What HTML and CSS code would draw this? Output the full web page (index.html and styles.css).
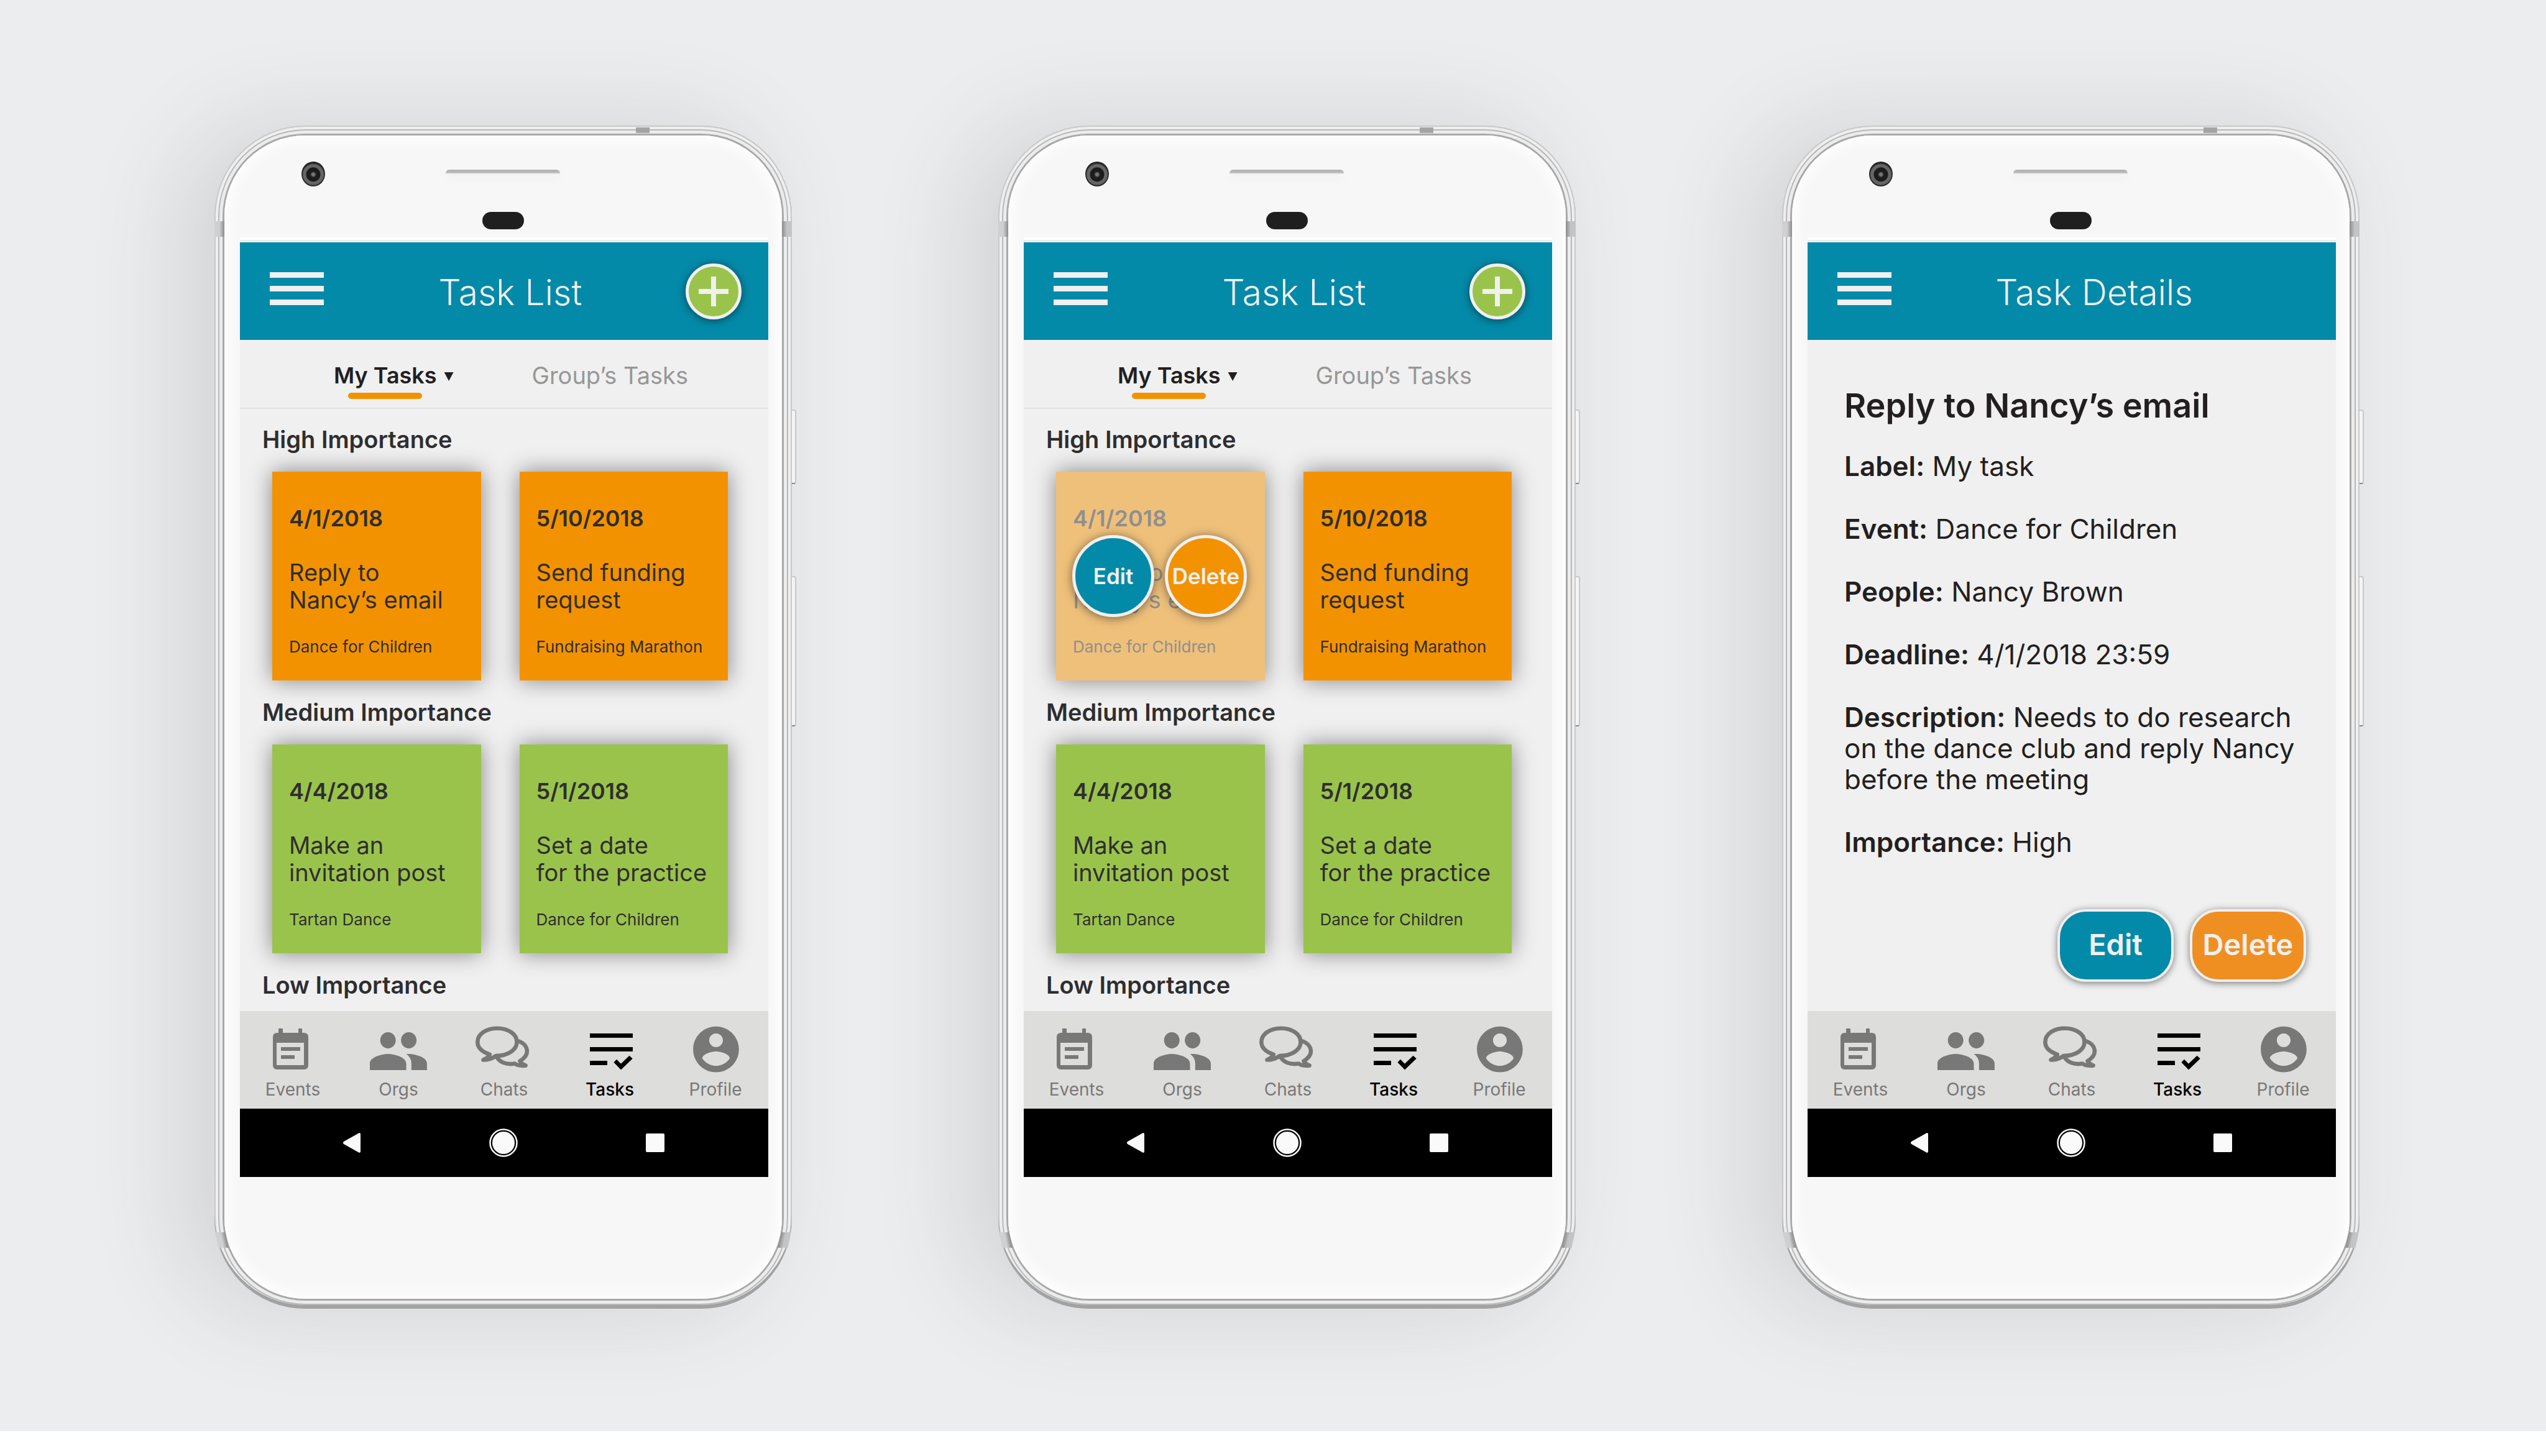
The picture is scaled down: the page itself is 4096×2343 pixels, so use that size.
FILE: index.html
```html
<!DOCTYPE html>
<html lang="en">
<head>
<meta charset="utf-8">
<meta name="viewport" content="width=device-width, initial-scale=1">
<title>Task List</title>
<link rel="stylesheet" href="styles.css">
</head>
<body>
<svg class="sprite" aria-hidden="true">
  <symbol id="i-menu" viewBox="0 0 87 53"><path d="M0 0h87v9H0zM0 22h87v9H0zM0 44h87v9H0z"/></symbol>
  <symbol id="i-plus" viewBox="0 0 48 48"><path d="M20 0h8v20h20v8H28v20h-8V28H0v-8h20z"/></symbol>
  <symbol id="i-events" viewBox="0 0 100 80"><path fill-rule="evenodd" d="M28 5h5q1 0 1 1v6h25V6q0-1 1-1h4q1 0 1 1v6h3q7 0 7 7v45q0 7-7 7H25q-7 0-7-7V19q0-7 7-7h2V6q0-1 1-1zM24 28v36h44V28zM31 35h31v6H31zM31 48h22v6H31z"/></symbol>
  <symbol id="i-orgs" viewBox="0 0 100 80"><g transform="translate(-.2 -10.8) scale(4.18 4.36)"><path d="M16 11c1.66 0 2.99-1.34 2.99-3S17.66 5 16 5c-1.66 0-3 1.34-3 3s1.34 3 3 3zm-8 0c1.66 0 2.99-1.34 2.99-3S9.66 5 8 5C6.34 5 5 6.34 5 8s1.34 3 3 3zm0 2c-2.33 0-7 1.17-7 3.5V19h14v-2.5c0-2.33-4.67-3.5-7-3.5zm8 0c-.29 0-.62.02-.97.05 1.16.84 1.97 1.97 1.97 3.45V19h6v-2.5c0-2.33-4.67-3.5-7-3.5z"/></g></symbol>
  <symbol id="i-chats" viewBox="0 0 100 80"><g fill="none" stroke="currentColor" stroke-width="6.6" stroke-linejoin="round" stroke-linecap="round"><path d="M26.8 46.8C13 42 7.3 35 7.3 27 7.3 14 21 4.8 38.9 4.8S70.5 14 70.5 27C70.5 39 57 48.8 37 49 32 52.6 26 55.7 16.5 55.5 22 53 25.5 50.5 26.8 46.8z"/><path d="M73.5 25.5C82 28.5 86.9 35 86.9 42c0 6.500-4.400 11-11.400 15.500C77 60.500 79.500 62.500 84.500 64.600 76 65.500 70.500 63.700 67 61.500 54 64 43 59 38.500 51.500"/></g></symbol>
  <symbol id="i-tasks" viewBox="0 0 100 80"><path d="M18 13h69v7H18zM18 35h69v7H18zM18 57h28v7H18zM56.400 59.500l4.600-4.800 7 7 13.500-13 5.200 4.800L68 71.500z"/></symbol>
  <symbol id="i-profile" viewBox="0 0 100 80"><g transform="translate(6.800 -5.500) scale(3.680)"><path d="M12 2C6.480 2 2 6.480 2 12s4.480 10 10 10 10-4.480 10-10S17.520 2 12 2zm0 3c1.660 0 3 1.340 3 3s-1.340 3-3 3-3-1.340-3-3 1.340-3 3-3zm0 14.200c-2.500 0-4.710-1.280-6-3.220.030-1.990 4-3.080 6-3.080 1.990 0 5.970 1.090 6 3.080-1.290 1.940-3.500 3.220-6 3.220z"/></g></symbol>
  <symbol id="i-back" viewBox="0 0 30 34"><path d="M27 1q2 0 2 2v28q0 2-2 2L2 19q-2-2 0-4z"/></symbol>
  <symbol id="i-home" viewBox="0 0 46 46"><circle cx="23" cy="23" r="18"/><circle cx="23" cy="23" r="21.500" fill="none" stroke="currentColor" stroke-width="2.500"/></symbol>
  <symbol id="i-recent" viewBox="0 0 30 30"><rect width="30" height="30" rx="2"/></symbol>
</svg>

<main class="stage">

  <section class="phone" aria-label="Task list">
    <i class="band band-top"></i><i class="band band-l1"></i><i class="band band-r1"></i><i class="band band-l2"></i><i class="band band-r2"></i>
    <i class="key key-power"></i><i class="key key-volume"></i>
    <div class="face">
      <div class="forehead"><i class="camera"></i><i class="speaker"></i><i class="sensor"></i></div>
      <div class="screen">
        <header class="appbar">
          <button class="menu" aria-label="Menu"><svg><use href="#i-menu"/></svg></button>
          <h1 class="title">Task List</h1>
          <button class="add" aria-label="Add task"><svg><use href="#i-plus"/></svg></button>
        </header>
        <div class="tabs">
          <button class="tab tab-on"><span class="tab-text">My Tasks</span><i class="caret"></i></button>
          <button class="tab">Group’s Tasks</button>
        </div>
        <div class="list">
          <h2 class="group">High Importance</h2>
          <div class="cards">
            <article class="card high">
              <time class="date">4/1/2018</time>
              <p class="task">Reply to<br>Nancy’s email</p>
              <p class="event">Dance for Children</p>
            </article>
            <article class="card high">
              <time class="date">5/10/2018</time>
              <p class="task">Send funding<br>request</p>
              <p class="event">Fundraising Marathon</p>
            </article>
          </div>
          <h2 class="group">Medium Importance</h2>
          <div class="cards">
            <article class="card medium">
              <time class="date">4/4/2018</time>
              <p class="task">Make an<br>invitation post</p>
              <p class="event">Tartan Dance</p>
            </article>
            <article class="card medium">
              <time class="date">5/1/2018</time>
              <p class="task">Set a date<br>for the practice</p>
              <p class="event">Dance for Children</p>
            </article>
          </div>
          <h2 class="group">Low Importance</h2>
        </div>
        <nav class="nav">
          <a class="item" href="#events"><svg><use href="#i-events"/></svg>Events</a>
          <a class="item" href="#orgs"><svg><use href="#i-orgs"/></svg>Orgs</a>
          <a class="item" href="#chats"><svg><use href="#i-chats"/></svg>Chats</a>
          <a class="item item-on" href="#tasks"><svg><use href="#i-tasks"/></svg>Tasks</a>
          <a class="item" href="#profile"><svg><use href="#i-profile"/></svg>Profile</a>
        </nav>
        <div class="system">
          <button class="sys back" aria-label="Back"><svg><use href="#i-back"/></svg></button>
          <button class="sys home" aria-label="Home"><svg><use href="#i-home"/></svg></button>
          <button class="sys recent" aria-label="Recent"><svg><use href="#i-recent"/></svg></button>
        </div>
      </div>
    </div>
  </section>

  <section class="phone" aria-label="Task list, card selected">
    <i class="band band-top"></i><i class="band band-l1"></i><i class="band band-r1"></i><i class="band band-l2"></i><i class="band band-r2"></i>
    <i class="key key-power"></i><i class="key key-volume"></i>
    <div class="face">
      <div class="forehead"><i class="camera"></i><i class="speaker"></i><i class="sensor"></i></div>
      <div class="screen">
        <header class="appbar">
          <button class="menu" aria-label="Menu"><svg><use href="#i-menu"/></svg></button>
          <h1 class="title">Task List</h1>
          <button class="add" aria-label="Add task"><svg><use href="#i-plus"/></svg></button>
        </header>
        <div class="tabs">
          <button class="tab tab-on"><span class="tab-text">My Tasks</span><i class="caret"></i></button>
          <button class="tab">Group’s Tasks</button>
        </div>
        <div class="list">
          <h2 class="group">High Importance</h2>
          <div class="cards">
            <article class="card selected">
              <time class="date">4/1/2018</time>
              <p class="task">Reply to<br>Nancy’s email</p>
              <p class="event">Dance for Children</p>
              <div class="actions">
                <button class="round edit">Edit</button>
                <button class="round delete">Delete</button>
              </div>
            </article>
            <article class="card high">
              <time class="date">5/10/2018</time>
              <p class="task">Send funding<br>request</p>
              <p class="event">Fundraising Marathon</p>
            </article>
          </div>
          <h2 class="group">Medium Importance</h2>
          <div class="cards">
            <article class="card medium">
              <time class="date">4/4/2018</time>
              <p class="task">Make an<br>invitation post</p>
              <p class="event">Tartan Dance</p>
            </article>
            <article class="card medium">
              <time class="date">5/1/2018</time>
              <p class="task">Set a date<br>for the practice</p>
              <p class="event">Dance for Children</p>
            </article>
          </div>
          <h2 class="group">Low Importance</h2>
        </div>
        <nav class="nav">
          <a class="item" href="#events"><svg><use href="#i-events"/></svg>Events</a>
          <a class="item" href="#orgs"><svg><use href="#i-orgs"/></svg>Orgs</a>
          <a class="item" href="#chats"><svg><use href="#i-chats"/></svg>Chats</a>
          <a class="item item-on" href="#tasks"><svg><use href="#i-tasks"/></svg>Tasks</a>
          <a class="item" href="#profile"><svg><use href="#i-profile"/></svg>Profile</a>
        </nav>
        <div class="system">
          <button class="sys back" aria-label="Back"><svg><use href="#i-back"/></svg></button>
          <button class="sys home" aria-label="Home"><svg><use href="#i-home"/></svg></button>
          <button class="sys recent" aria-label="Recent"><svg><use href="#i-recent"/></svg></button>
        </div>
      </div>
    </div>
  </section>

  <section class="phone" aria-label="Task details">
    <i class="band band-top"></i><i class="band band-l1"></i><i class="band band-r1"></i><i class="band band-l2"></i><i class="band band-r2"></i>
    <i class="key key-power"></i><i class="key key-volume"></i>
    <div class="face">
      <div class="forehead"><i class="camera"></i><i class="speaker"></i><i class="sensor"></i></div>
      <div class="screen">
        <header class="appbar">
          <button class="menu" aria-label="Menu"><svg><use href="#i-menu"/></svg></button>
          <h1 class="title title-wide">Task Details</h1>
        </header>
        <div class="details">
          <h2 class="heading">Reply to Nancy’s email</h2>
          <div class="fields">
            <p><strong>Label:</strong> My task</p>
            <p><strong>Event:</strong> Dance for Children</p>
            <p><strong>People:</strong> Nancy Brown</p>
            <p><strong>Deadline:</strong> 4/1/2018 23:59</p>
            <p><strong>Description:</strong> Needs to do research<br>on the dance club and reply Nancy<br>before the meeting</p>
            <p><strong>Importance:</strong> High</p>
          </div>
          <div class="buttons">
            <button class="pill edit">Edit</button>
            <button class="pill delete">Delete</button>
          </div>
        </div>
        <nav class="nav">
          <a class="item" href="#events"><svg><use href="#i-events"/></svg>Events</a>
          <a class="item" href="#orgs"><svg><use href="#i-orgs"/></svg>Orgs</a>
          <a class="item" href="#chats"><svg><use href="#i-chats"/></svg>Chats</a>
          <a class="item item-on" href="#tasks"><svg><use href="#i-tasks"/></svg>Tasks</a>
          <a class="item" href="#profile"><svg><use href="#i-profile"/></svg>Profile</a>
        </nav>
        <div class="system">
          <button class="sys back" aria-label="Back"><svg><use href="#i-back"/></svg></button>
          <button class="sys home" aria-label="Home"><svg><use href="#i-home"/></svg></button>
          <button class="sys recent" aria-label="Recent"><svg><use href="#i-recent"/></svg></button>
        </div>
      </div>
    </div>
  </section>

</main>
</body>
</html>
```
FILE: styles.css
```css
*, *::before, *::after { box-sizing: border-box; }
body, h1, h2, p { margin: 0; }
body { background: #fff; color: #231f20; font-family: Inter, "Open Sans", sans-serif; }
button { padding: 0; border: 0; background: none; color: inherit; font: inherit; cursor: pointer; }
svg { display: block; fill: currentColor; }
i { display: block; }
.sprite { position: absolute; width: 0; height: 0; }

.stage {
  display: grid;
  grid-template-columns: repeat(3, 1fr);
  gap: 332px;
  padding: 202px 300px 197px 345px;
  background: #ecedef;
}

/* Handset */
.phone {
  position: relative;
  padding: 16px;
  border-radius: 146px;
  background: #ececec;
  box-shadow:
    inset 0 -6px 0 0 #a2a2a2,
    inset 0 0 0 2px #c9c9c9,
    inset 0 0 0 6px #efefef,
    inset 0 0 0 8px #b8b8b8,
    inset 0 0 0 13px #ececec,
    inset 0 0 0 16px #a8a8a8,
    -50px 0 150px rgba(60, 66, 64, .15);
}
.face {
  padding: 0 22px 196px 25px;
  border-radius: 130px;
  background: #f7f7f7;
  box-shadow: inset 0 0 24px 6px #fff;
}
.forehead {
  display: grid;
  grid-template: 53px 70px 49px / 1fr 184px 1fr;
  padding-right: 4px;
}
.camera {
  grid-area: 1 / 1 / 3 / 2;
  width: 38px;
  height: 40px;
  margin: 42px 0 0 99px;
  border-radius: 50%;
  background: radial-gradient(circle at 50% 52%, #777 0 2px, #1c1c1c 5px 11px, #666 12px 16px, #262626 18px);
}
.speaker {
  grid-area: 2 / 2;
  height: 7px;
  margin-top: 2px;
  border-radius: 6px 6px 0 0;
  background: linear-gradient(#b4b4b4 4px, #ececec);
  box-shadow: 0 8px 12px #f1f1f1;
}
.sensor {
  grid-area: 3 / 2;
  justify-self: center;
  width: 67px;
  height: 28px;
  border-radius: 14px;
  background: #1f1f1f;
}
.band { position: absolute; width: 16px; height: 25px; background: linear-gradient(90deg, #d0d0d0 50%, #8c8c8c); }
.band-top { top: 3px; right: 229px; width: 22px; height: 9px; background: #a4a4a4; }
.band-l1 { top: 154px; left: 0; }
.band-r1 { top: 154px; right: 0; background: linear-gradient(270deg, #c4c4c4 50%, #8c8c8c); }
.band-l2 { bottom: 98px; left: 4px; transform: skewX(12deg); }
.band-r2 { bottom: 98px; right: 4px; transform: skewX(-12deg); background: linear-gradient(270deg, #c4c4c4 50%, #8c8c8c); }
.key { position: absolute; left: 100%; width: 7px; border: 2px solid #c9c9c9; border-left: 0; border-bottom-color: #8a8a8a; border-radius: 0 4px 4px 0; background: #f4f4f4; }
.key-power { top: 457px; height: 120px; }
.key-volume { top: 725px; height: 242px; }

.screen { background: #f0f0f0; box-shadow: 0 -4px 0 #ededed, 0 -8px 0 #fff; }

/* App bar */
.appbar {
  display: flex;
  align-items: center;
  height: 157px;
  padding: 0 43px 0 48px;
  background: #048aa9;
  color: #f0f0f0;
}
.menu { width: 87px; height: 61px; padding-bottom: 8px; }
.menu svg { width: 87px; height: 53px; }
.title { flex: 1; padding: 4px 0 0 18px; font-size: 57px; font-weight: 300; line-height: 68px; text-align: center; }
.title-wide { padding: 4px 20px 0 0; }
.add {
  display: grid;
  place-items: center;
  width: 90px;
  height: 90px;
  border: 5px solid #f0f0f0;
  border-radius: 50%;
  background: #9ac34c;
  box-shadow: 0 2px 14px rgba(0, 0, 0, .5);
}
.add svg { width: 48px; height: 48px; }

/* Tabs */
.tabs {
  display: flex;
  justify-content: space-between;
  height: 111px;
  padding: 35px 129px 0 151px;
  border-bottom: 2px solid #e2e2e2;
}
.tab { position: relative; display: flex; gap: 12px; height: 44px; color: #979797; font-size: 38px; line-height: 44px; }
.tab-on { color: #231f20; font-size: 36px; font-weight: 600; }
.tab-on::after {
  content: "";
  position: absolute;
  left: 23px;
  top: 50px;
  width: 119px;
  height: 10px;
  border-radius: 5px;
  background: #f39200;
}
.caret { width: 15px; height: 14px; margin-top: 17px; background: #231f20; clip-path: polygon(0 0, 100% 0, 50% 100%); }

/* Task cards */
.list { padding: 27px 0 20px; color: #2f2e2f; }
.group { padding-left: 36px; font-size: 38px; font-weight: 600; line-height: 44px; }
.cards {
  display: grid;
  grid-template-columns: 1fr 1fr;
  gap: 62px;
  margin: 30px 65px 29px 52px;
}
.card {
  position: relative;
  padding: 53px 0 38px 27px;
  box-shadow: 0 0 34px rgba(0, 0, 0, .45);
  white-space: nowrap;
}
.high { background: #f39200; }
.medium { background: #9ac34c; }
.selected { background: #efc07a; color: #8f8f8f; }
.date { display: block; font-size: 36px; font-weight: 600; line-height: 44px; }
.task { margin-top: 43px; font-size: 38px; line-height: 44px; }
.event { margin-top: 38px; font-size: 26px; line-height: 32px; }
.actions { position: absolute; top: 102px; left: 26px; display: flex; gap: 17px; }
.round {
  width: 132px;
  height: 132px;
  border: 5px solid #f0f0f0;
  border-radius: 50%;
  color: #f0f0f0;
  font-size: 35px;
  font-weight: 600;
  box-shadow: 0 2px 16px rgba(0, 0, 0, .5);
}
.edit { background: #048aa9; }
.delete { background: #f39200; }

/* Task details */
.details { padding: 76px 48px 47px 59px; }
.heading { font-size: 54px; font-weight: 600; line-height: 60px; }
.fields { display: grid; gap: 51px; margin-top: 42px; font-size: 44px; line-height: 50px; white-space: nowrap; }
.fields strong { font-weight: 600; }
.buttons { display: flex; justify-content: flex-end; gap: 26px; margin-top: 83px; }
.pill {
  width: 187px;
  height: 117px;
  padding-bottom: 4px;
  border: 4px solid #f0f0f0;
  border-radius: 46px;
  color: #f0f0f0;
  font-size: 47px;
  font-weight: 600;
  box-shadow: 0 2px 12px rgba(0, 0, 0, .5);
}
.pill.delete { background: #ef8f22; }

/* Bottom navigation */
.nav { display: grid; grid-template-columns: repeat(5, 1fr); padding: 23px 0 15px; background: #dddddb; }
.item {
  display: flex;
  flex-direction: column;
  align-items: center;
  gap: 7px;
  color: #787878;
  font-size: 28px;
  line-height: 32px;
  text-decoration: none;
}
.item svg { width: 100px; height: 80px; }
.item-on { color: #000; font-weight: 500; }

.system { display: flex; align-items: center; justify-content: center; gap: 206px; height: 110px; padding-right: 2px; background: #000; color: #fafafa; }
.back { width: 30px; height: 34px; }
.home { width: 46px; height: 46px; }
.recent { width: 30px; height: 30px; }
.sys svg { width: 100%; height: 100%; }
```
